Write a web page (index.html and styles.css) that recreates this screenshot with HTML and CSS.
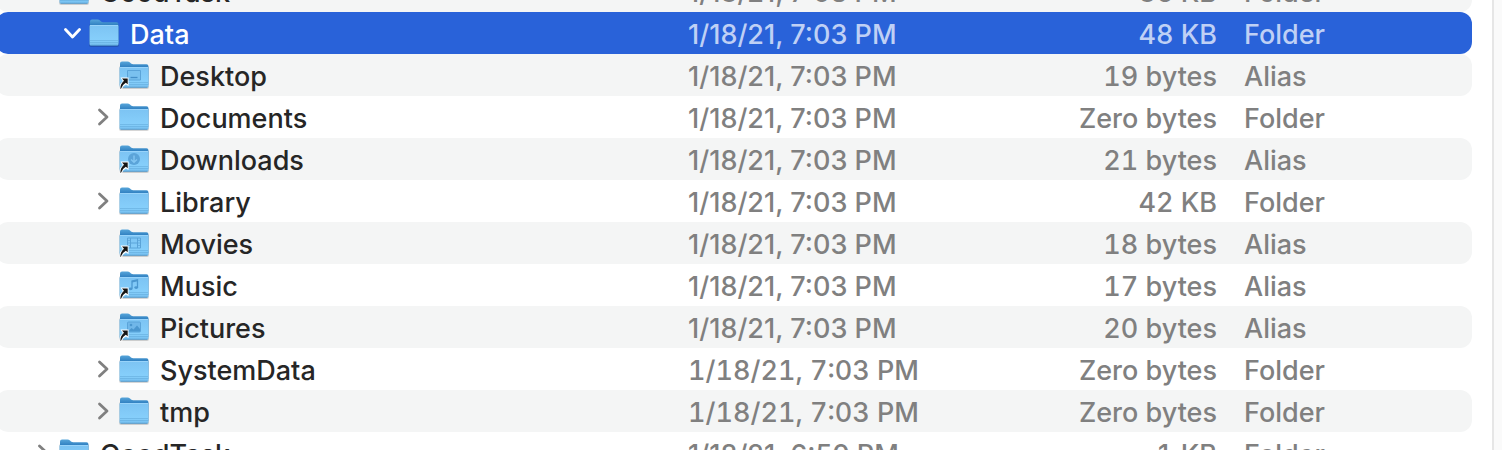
FILE: index.html
```
<!DOCTYPE html>
<html lang="en">
<head>
    <meta charset="UTF-8">
    <meta name="viewport" content="width=device-width, initial-scale=1.0">
    <title>Data</title>
    <link rel="stylesheet" href="styles.css">
</head>
<body>
    <!-- shared icon shapes -->
    <svg class="defs" aria-hidden="true">
        <defs>
            <linearGradient id="back" x1="0" y1="0" x2="0" y2="1">
                <stop offset="0" stop-color="#56a5da"/>
                <stop offset="0.25" stop-color="#2f7fc0"/>
                <stop offset="1" stop-color="#3f8dcb"/>
            </linearGradient>
            <linearGradient id="front" x1="0" y1="0" x2="0" y2="1">
                <stop offset="0" stop-color="#7cc3f3"/>
                <stop offset="0.75" stop-color="#86cffb"/>
                <stop offset="1" stop-color="#74bdee"/>
            </linearGradient>
        </defs>
        <symbol id="folder" viewBox="0 0 32 30">
            <rect x="1" y="6" width="30" height="23" rx="2" fill="#000" opacity="0.16"/>
            <path d="M2 3.500Q2 1.500 4 1.500H9.500Q11 1.500 12 2.500L13 3.400Q14 4.200 15.300 4.200H28.500Q30.400 4.200 30.400 6V25H2Z" fill="url(#back)"/>
            <path d="M1.500 8Q1.500 7 2.500 7H29.500Q30.500 7 30.500 8V26Q30.500 27.500 29 27.500H3Q1.500 27.500 1.500 26Z" fill="url(#front)"/>
            <path d="M2 7.500H30" stroke="#a5dafc" stroke-width="0.700"/>
            <path d="M2 22.500H30M2 24.500H30" stroke="#63abdc" stroke-width="0.600"/>
            <path d="M2.500 27.300H29.500" stroke="#4c91c4" stroke-width="0.800"/>
        </symbol>
        <symbol id="arrow" viewBox="0 0 10 13">
            <path d="M1.500 0.500H9.500V9L7 7.500Q3.500 9 3 12.500H0.500Q-0.300 7.500 3.800 4.300Z" fill="#fff"/>
            <path d="M3 1.500H8.700V7.300L6.800 5.800Q3 8 2 11.700H1.300Q1.300 7 5 3.800Z" fill="#151515"/>
        </symbol>
        <symbol id="right" viewBox="0 0 12 18">
            <path d="M2.500 2L10 9L2.500 16" fill="none" stroke="currentColor" stroke-width="2.800" stroke-linecap="round" stroke-linejoin="round"/>
        </symbol>
        <symbol id="down" viewBox="0 0 18 12">
            <path d="M1.500 2.500L8.500 10L15.500 2.500" fill="none" stroke="currentColor" stroke-width="2.800" stroke-linecap="round" stroke-linejoin="round"/>
        </symbol>
    </svg>

    <main class="window">
        <div class="list">
            <table>
                <colgroup>
                    <col>
                    <col class="col-date">
                    <col class="col-size">
                    <col class="col-kind">
                </colgroup>
                <tbody>
                    <tr>
                        <td><div class="name level-0">
                            <button class="toggle" aria-label="Collapse GoodTask"><svg width="18" height="12"><use href="#down"/></svg></button>
                            <svg class="icon"><use href="#folder"/></svg>
                            <span>GoodTask</span>
                        </div></td>
                        <td>1/18/21, 7:03 PM</td>
                        <td class="size">86 KB</td>
                        <td>Folder</td>
                    </tr>
                    <tr class="selected">
                        <td><div class="name level-1">
                            <button class="toggle" aria-label="Collapse Data"><svg width="18" height="12"><use href="#down"/></svg></button>
                            <svg class="icon"><use href="#folder"/></svg>
                            <span>Data</span>
                        </div></td>
                        <td>1/18/21, 7:03 PM</td>
                        <td class="size">48 KB</td>
                        <td>Folder</td>
                    </tr>
                    <tr>
                        <td><div class="name level-2">
                            <svg class="icon" viewBox="0 0 32 30">
                                <use href="#folder" width="32" height="30"/>
                                <path d="M9.500 10.500H22.500V20H9.500Z" fill="#7ac1ef" stroke="#5ba4d9"/>
                                <path d="M12.500 17.500H19.500" stroke="#458fc8" stroke-width="1.300"/>
                                <use href="#arrow" x="1" y="17" width="10" height="13"/>
                            </svg>
                            <span>Desktop</span>
                        </div></td>
                        <td>1/18/21, 7:03 PM</td>
                        <td class="size">19 bytes</td>
                        <td>Alias</td>
                    </tr>
                    <tr>
                        <td><div class="name level-2">
                            <button class="toggle" aria-label="Expand Documents"><svg width="12" height="18"><use href="#right"/></svg></button>
                            <svg class="icon"><use href="#folder"/></svg>
                            <span>Documents</span>
                        </div></td>
                        <td>1/18/21, 7:03 PM</td>
                        <td class="size">Zero bytes</td>
                        <td>Folder</td>
                    </tr>
                    <tr>
                        <td><div class="name level-2">
                            <svg class="icon" viewBox="0 0 32 30">
                                <use href="#folder" width="32" height="30"/>
                                <circle cx="16" cy="15" r="6" fill="#5ba4d9"/>
                                <path d="M16 11.500V18M13 15.500L16 18.300L19 15.500" fill="none" stroke="#83c6f2" stroke-width="1.400"/>
                                <use href="#arrow" x="1" y="17" width="10" height="13"/>
                            </svg>
                            <span>Downloads</span>
                        </div></td>
                        <td>1/18/21, 7:03 PM</td>
                        <td class="size">21 bytes</td>
                        <td>Alias</td>
                    </tr>
                    <tr>
                        <td><div class="name level-2">
                            <button class="toggle" aria-label="Expand Library"><svg width="12" height="18"><use href="#right"/></svg></button>
                            <svg class="icon"><use href="#folder"/></svg>
                            <span>Library</span>
                        </div></td>
                        <td>1/18/21, 7:03 PM</td>
                        <td class="size">42 KB</td>
                        <td>Folder</td>
                    </tr>
                    <tr>
                        <td><div class="name level-2">
                            <svg class="icon" viewBox="0 0 32 30">
                                <use href="#folder" width="32" height="30"/>
                                <path d="M9.500 10H22.500V20H9.500ZM12.500 10V20M19.500 10V20M12.500 15H19.500" fill="none" stroke="#5ba4d9"/>
                                <path d="M9.500 12.500H12M9.500 15H12M9.500 17.500H12M20 12.500H22.500M20 15H22.500M20 17.500H22.500" stroke="#5ba4d9" stroke-width="0.700"/>
                                <use href="#arrow" x="1" y="17" width="10" height="13"/>
                            </svg>
                            <span>Movies</span>
                        </div></td>
                        <td>1/18/21, 7:03 PM</td>
                        <td class="size">18 bytes</td>
                        <td>Alias</td>
                    </tr>
                    <tr>
                        <td><div class="name level-2">
                            <svg class="icon" viewBox="0 0 32 30">
                                <use href="#folder" width="32" height="30"/>
                                <path d="M14 18.500V11L19.500 9.800V17.500" fill="none" stroke="#4b97cf" stroke-width="1.300"/>
                                <path d="M14 11.800L19.500 10.600" stroke="#4b97cf" stroke-width="1.500"/>
                                <ellipse cx="12.700" cy="18.800" rx="1.900" ry="1.400" fill="#4b97cf"/>
                                <ellipse cx="18.200" cy="17.600" rx="1.900" ry="1.400" fill="#4b97cf"/>
                                <use href="#arrow" x="1" y="17" width="10" height="13"/>
                            </svg>
                            <span>Music</span>
                        </div></td>
                        <td>1/18/21, 7:03 PM</td>
                        <td class="size">17 bytes</td>
                        <td>Alias</td>
                    </tr>
                    <tr>
                        <td><div class="name level-2">
                            <svg class="icon" viewBox="0 0 32 30">
                                <use href="#folder" width="32" height="30"/>
                                <rect x="9.500" y="10" width="13" height="10" rx="1" fill="#70b7e9" stroke="#5ba4d9"/>
                                <circle cx="13" cy="13" r="1.300" fill="#4b97cf"/>
                                <path d="M10 19.500L13.500 16L15.500 17.500L19 13.500L22 17V19.500Z" fill="#4b97cf"/>
                                <use href="#arrow" x="1" y="17" width="10" height="13"/>
                            </svg>
                            <span>Pictures</span>
                        </div></td>
                        <td>1/18/21, 7:03 PM</td>
                        <td class="size">20 bytes</td>
                        <td>Alias</td>
                    </tr>
                    <tr>
                        <td><div class="name level-2">
                            <button class="toggle" aria-label="Expand SystemData"><svg width="12" height="18"><use href="#right"/></svg></button>
                            <svg class="icon"><use href="#folder"/></svg>
                            <span>SystemData</span>
                        </div></td>
                        <td class="tabular">1/18/21, 7:03 PM</td>
                        <td class="size">Zero bytes</td>
                        <td>Folder</td>
                    </tr>
                    <tr>
                        <td><div class="name level-2">
                            <button class="toggle" aria-label="Expand tmp"><svg width="12" height="18"><use href="#right"/></svg></button>
                            <svg class="icon"><use href="#folder"/></svg>
                            <span>tmp</span>
                        </div></td>
                        <td class="tabular">1/18/21, 7:03 PM</td>
                        <td class="size">Zero bytes</td>
                        <td>Folder</td>
                    </tr>
                    <tr>
                        <td><div class="name level-0">
                            <button class="toggle" aria-label="Expand GoodTask"><svg width="12" height="18"><use href="#right"/></svg></button>
                            <svg class="icon"><use href="#folder"/></svg>
                            <span>GoodTask</span>
                        </div></td>
                        <td>1/18/21, 6:50 PM</td>
                        <td class="size">1 KB</td>
                        <td>Folder</td>
                    </tr>
                </tbody>
            </table>
        </div>
        <div class="scrollbar"></div>
    </main>
</body>
</html>
```
FILE: styles.css
```
* {
    box-sizing: border-box;
}
body {
    margin: 0;
    background: #fff;
    font-family: Inter, "Liberation Sans", sans-serif;
    font-size: 27px;
    font-weight: 450;
    font-optical-sizing: none;
    line-height: 38px;
    color: #808080;
}
.defs {
    position: absolute;
    width: 0;
    height: 0;
}
.window {
    display: flex;
    height: 100vh;
    overflow: hidden;
}
/* the list is scrolled down a little, so the first row is cut */
.list {
    flex: 1;
    min-width: 0;
    margin: -30px 20px 0 -4px;
}
.scrollbar {
    width: 10px;
    background: #fafafa;
    border-left: 2px solid #e6e6e6;
}
table {
    width: 100%;
    table-layout: fixed;
    border-collapse: separate;
    border-spacing: 0;
}
.col-date {
    width: 320px;
}
.col-size {
    width: 209px;
}
.col-kind {
    width: 255px;
}
td {
    height: 42px;
    padding: 4px 0 0;
    white-space: nowrap;
}
td:first-child {
    padding: 0;
    border-radius: 12px 0 0 12px;
}
td:last-child {
    padding-left: 27px;
    border-radius: 0 12px 12px 0;
}
tr:nth-child(odd) td {
    background: #f4f5f5;
}
.size {
    text-align: right;
}
.size,
.tabular {
    font-variant-numeric: tabular-nums;
}
.name {
    display: flex;
    align-items: center;
    height: 42px;
    color: #262626;
}
.name span {
    margin-left: 10px;
    padding-top: 4px;
}
.icon {
    flex: none;
    width: 32px;
    height: 30px;
}
.toggle {
    display: flex;
    align-items: center;
    justify-content: center;
    width: 30px;
    height: 42px;
    margin-left: -30px;
    padding: 0;
    border: 0;
    background: none;
    color: #808080;
}
.level-0 {
    padding-left: 62px;
}
.level-1 {
    padding-left: 92px;
}
.level-2 {
    padding-left: 122px;
}
tr.selected td {
    background: #2962d9;
    color: #bfd0f5;
}
.selected .name,
.selected .toggle {
    color: #fff;
}
```
